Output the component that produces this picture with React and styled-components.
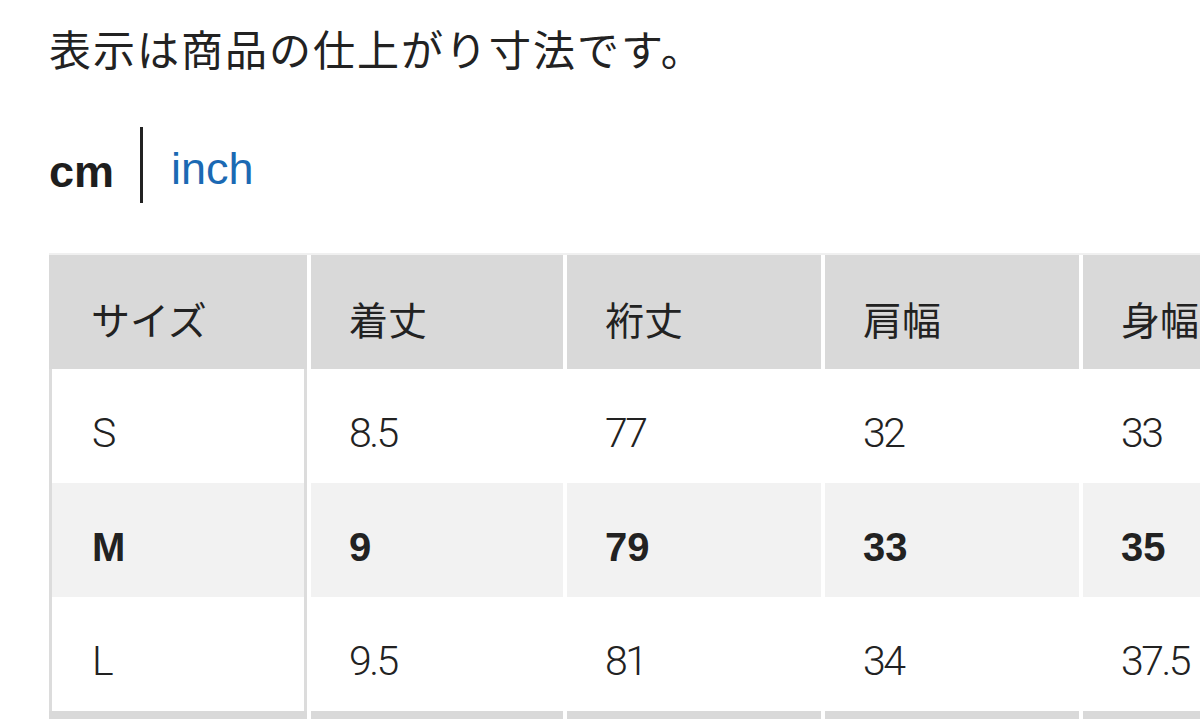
import React from "react";
import styled, { createGlobalStyle } from "styled-components";

const GlobalStyle = createGlobalStyle`
  html, body {
    margin: 0;
    padding: 0;
    background: #ffffff;
    overflow: hidden;
  }
  body {
    font-family: "Liberation Sans", "Noto Sans CJK JP", sans-serif;
    color: #1e1e1e;
  }
`;

const columns = ["サイズ", "着丈", "裄丈", "肩幅", "身幅"];

const rows = [
  { size: "S", values: ["8.5", "77", "32", "33"] },
  { size: "M", values: ["9", "79", "33", "35"], active: true },
  { size: "L", values: ["9.5", "81", "34", "37.5"] },
];

function App() {
  return (
    <Page>
      <GlobalStyle />
      <Note>表示は商品の仕上がり寸法です。</Note>
      <UnitSwitch>
        <Unit $active>cm</Unit>
        <Divider />
        <Unit>inch</Unit>
      </UnitSwitch>
      <TableWrap>
        <Row>
          {columns.map((c, i) => (
            <HeadCell key={c} $first={i === 0}>
              {c}
            </HeadCell>
          ))}
        </Row>
        {rows.map((r) => (
          <Row key={r.size}>
            <SizeCell $active={r.active}>{r.size}</SizeCell>
            {r.values.map((v, i) => (
              <Cell key={i} $active={r.active}>
                {v}
              </Cell>
            ))}
          </Row>
        ))}
        <Row>
          {columns.map((c) => (
            <NextCell key={c} />
          ))}
        </Row>
      </TableWrap>
    </Page>
  );
}

const Page = styled.div`
  padding: 20px 0 0 49px;
`;

const Note = styled.p`
  margin: 0;
  font-family: "Noto Sans CJK JP", sans-serif;
  font-size: 42px;
  line-height: 56px;
  color: #222;
  letter-spacing: 2px;
`;

const UnitSwitch = styled.div`
  display: flex;
  align-items: center;
  height: 76px;
  margin-top: 51px;
`;

const Unit = styled.span`
  font-family: "Liberation Sans", sans-serif;
  font-size: ${(p) => (p.$active ? "45px" : "45px")};
  font-weight: ${(p) => (p.$active ? 700 : 400)};
  color: ${(p) => (p.$active ? "#1e1e1e" : "#1b69b3")};
  padding-top: ${(p) => (p.$active ? "14px" : "8px")};
`;

const Divider = styled.span`
  width: 3px;
  height: 76px;
  background: #222;
  margin: 0 28px 0 26px;
`;

const TableWrap = styled.div`
  margin-top: 50px;
  width: 1151px;
  overflow: hidden;
  border-top: 2px solid #f0f0f0;
`;

const Row = styled.div`
  display: grid;
  grid-template-columns: 258px 252px 254px 254px 254px;
  column-gap: 4px;
  height: 114px;
`;

const HeadCell = styled.div`
  display: flex;
  align-items: center;
  background: #d9d9d9;
  padding: 12px 0 0 ${(p) => (p.$first ? "42px" : "38px")};
  font-family: "Noto Sans CJK JP", sans-serif;
  font-size: 39px;
  color: #222;
  white-space: nowrap;
`;

const Cell = styled.div`
  display: flex;
  align-items: center;
  padding: 14px 0 0 38px;
  background: ${(p) => (p.$active ? "#f2f2f2" : "#ffffff")};
  font-family: ${(p) =>
    p.$active ? '"Liberation Sans", sans-serif' : "Roboto, sans-serif"};
  font-size: ${(p) => (p.$active ? "40px" : "41px")};
  font-weight: ${(p) => (p.$active ? 700 : 300)};
  letter-spacing: ${(p) => (p.$active ? "0" : "-2.5px")};
  color: #222;
  white-space: nowrap;
`;

const SizeCell = styled(Cell)`
  padding-left: 40px;
  border-left: 3px solid #dcdcdc;
  border-right: 3px solid #dcdcdc;
`;

const NextCell = styled.div`
  background: #d9d9d9;
`;

export default App;
